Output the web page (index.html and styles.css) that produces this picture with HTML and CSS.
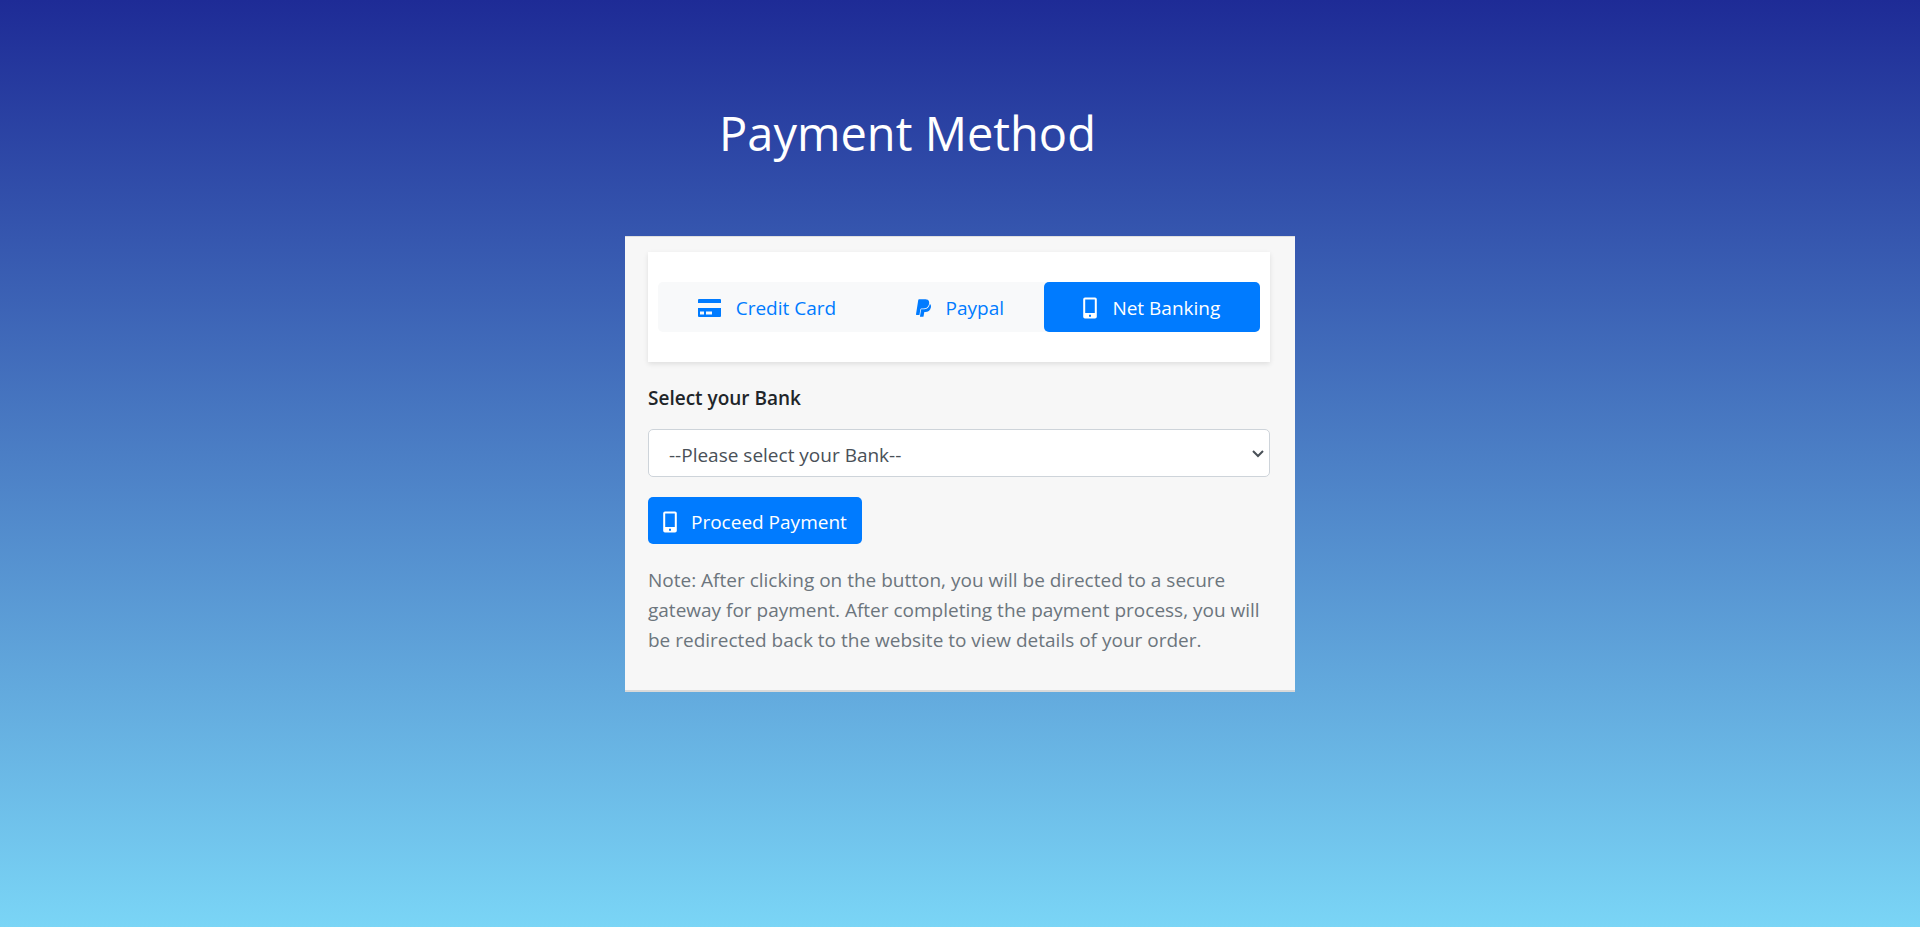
FILE: index.html
```
<!DOCTYPE html>
<html lang="en">
<head>
<meta charset="utf-8">
<meta name="viewport" content="width=device-width, initial-scale=1">
<title>Payment Method</title>
<link rel="stylesheet" href="styles.css">
</head>
<body>
<svg class="sprite" aria-hidden="true">
  <symbol id="mobile" viewBox="0 0 14 22">
    <path fill-rule="evenodd" d="M2 0.5h10a1.8 1.8 0 0 1 1.800 1.800v17.400a1.800 1.800 0 0 1-1.800 1.800H2a1.800 1.800 0 0 1-1.800-1.800V2.300A1.800 1.800 0 0 1 2 .5zM2.200 2.500v13.500h9.600V2.500zM6 17.800v2h2v-2z"/>
  </symbol>
</svg>
<main class="page">
  <h1 class="title">Payment Method</h1>
  <section class="card">
    <div class="tab-panel">
      <nav class="tabs" aria-label="Payment methods">
        <a class="tab" href="#credit-card">
          <svg class="icon icon-card" viewBox="0 0 23 18" aria-hidden="true"><path fill-rule="evenodd" d="M1 0h21a1 1 0 0 1 1 1v3H0V1a1 1 0 0 1 1-1zM0 9h23v8a1 1 0 0 1-1 1H1a1 1 0 0 1-1-1zM2 12.500v3h4v-3zM8 12.500v3h6v-3z"/></svg>
          <span>Credit Card</span>
        </a>
        <a class="tab" href="#paypal">
          <svg class="icon icon-paypal" viewBox="0 32 384 448" aria-hidden="true"><path d="M111.400 295.900c-3.500 19.200-17.400 108.700-21.500 134-.3 1.800-1 2.500-3 2.500H12.300c-7.600 0-13.100-6.600-12.100-13.900L58.800 46.600c1.500-9.600 10.100-16.900 20-16.900 152.300 0 165.100-3.700 204 11.400 60.100 23.300 65.600 79.500 44 140.300-21.500 62.600-72.500 89.500-140.100 90.300-43.400.7-69.500-7-75.300 24.200zM357.100 152c-1.800-1.300-2.500-1.800-3 1.300-2 11.400-5.100 22.500-8.800 33.600-39.900 113.800-150.500 103.900-204.500 103.900-6.100 0-10.100 3.300-10.900 9.400-22.600 140.400-27.100 169.700-27.100 169.700-1 7.100 3.500 12.900 10.600 12.900h63.500c8.600 0 15.700-6.300 17.400-14.900.7-5.400-1.100 6.100 14.400-91.300 4.600-22 14.300-19.700 29.300-19.700 71 0 126.400-28.800 142.900-112.300 6.500-34.800 4.600-71.400-23.800-92.600z"/></svg>
          <span>Paypal</span>
        </a>
        <a class="tab tab-active" href="#net-banking" aria-current="true">
          <svg class="icon icon-mobile" aria-hidden="true"><use href="#mobile"/></svg>
          <span>Net Banking</span>
        </a>
      </nav>
    </div>
    <form class="bank-form">
      <label class="bank-label" for="bank">Select your Bank</label>
      <div class="select-wrap">
        <select class="bank-select" id="bank">
          <option>--Please select your Bank--</option>
        </select>
        <svg class="chevron" viewBox="0 0 12 8" aria-hidden="true"><path d="M1 1l5 5 5-5"/></svg>
      </div>
      <button class="proceed" type="button">
        <svg class="icon icon-mobile" aria-hidden="true"><use href="#mobile"/></svg>
        <span>Proceed Payment</span>
      </button>
      <p class="note">Note: After clicking on the button, you will be directed to a secure gateway for payment. After completing the payment process, you will be redirected back to the website to view details of your order.</p>
    </form>
  </section>
</main>
</body>
</html>
```

FILE: styles.css
```
* {
  box-sizing: border-box;
}

body {
  margin: 0;
  min-height: 100vh;
  background: linear-gradient(to bottom, #1e2b96, #7ad5f6);
  font-family: "Segoe UI", "Open Sans", "Noto Sans", sans-serif;
  font-size: 19px;
  line-height: 30px;
  color: #212529;
}

.sprite {
  display: none;
}

.page {
  display: flex;
  flex-direction: column;
  align-items: center;
  padding: 101px 20px 40px;
}

.title {
  margin: 0 0 71px;
  width: 100%;
  max-width: 482px;
  font-size: 47px;
  font-weight: 400;
  line-height: 64px;
  color: #fff;
  white-space: nowrap;
}

.card {
  width: 100%;
  max-width: 670px;
  padding: 15px 25px 35px 23px;
  background: #f7f7f7;
  border-top: 1px solid #dfdfdf;
  border-bottom: 2px solid #d9d9d9;
}

.tab-panel {
  padding: 30px 10px;
  background: #fff;
  box-shadow: 0 2px 5px rgba(0, 0, 0, 0.1);
}

.tabs {
  display: flex;
  background: #f8f9fa;
  border-radius: 5px;
}

.tab {
  display: flex;
  flex: 1 1 auto;
  align-items: center;
  justify-content: center;
  gap: 15px;
  padding: 11px 20px 9px;
  border-radius: 5px;
  color: #007bff;
  text-decoration: none;
  white-space: nowrap;
}

.tab-active {
  background: #007bff;
  color: #fff;
}

.icon {
  flex: none;
  fill: currentColor;
}

.icon-card {
  width: 23px;
  height: 18px;
}

.icon-paypal {
  width: 15px;
  height: 18px;
}

.icon-mobile {
  width: 14px;
  height: 22px;
}

.bank-form {
  display: flex;
  flex-direction: column;
  align-items: flex-start;
  padding-top: 21px;
}

.bank-label {
  font-weight: 600;
}

.select-wrap {
  position: relative;
  width: 100%;
  margin: 16px 0 20px;
}

.bank-select {
  display: block;
  width: 100%;
  height: 48px;
  padding: 4px 40px 0 20px;
  border: 1px solid #ced4da;
  border-radius: 5px;
  background: #fff;
  color: #495057;
  font: inherit;
  appearance: none;
}

.chevron {
  position: absolute;
  top: 21px;
  right: 6px;
  width: 12px;
  height: 8px;
  fill: none;
  stroke: #495057;
  stroke-width: 2;
  pointer-events: none;
}

.proceed {
  display: flex;
  align-items: center;
  gap: 14px;
  height: 47px;
  padding: 2px 15px 0;
  border: 0;
  border-radius: 5px;
  background: #007bff;
  color: #fff;
  font: inherit;
}

.note {
  margin: 21px 0 0;
  color: #6c757d;
}
```
